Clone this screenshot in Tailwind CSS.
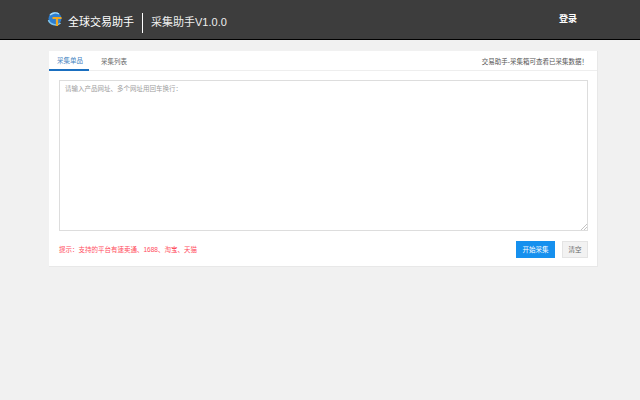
<!DOCTYPE html>
<html>
<head>
    <title>采集助手</title>
    <script src="https://cdn.jsdelivr.net/npm/@tailwindcss/browser@4"></script>
</head>
<body class="bg-[#f1f1f1] h-[400px] overflow-hidden font-['Liberation_Sans','Noto_Sans_CJK_SC',sans-serif]">

<header class="h-10 bg-[#3d3d3d] border-b border-black flex items-center pl-[47px] pr-[63px]">
    <div class="flex items-center pt-[6px]">
        <svg class="w-[17px] h-[17px] mr-1 -mt-[6px]" viewBox="0 0 17 17">
            <circle cx="8" cy="7.5" r="6.5" fill="#2f7fd0"/>
            <path d="M3 4c2-2 6-3 9-1" stroke="#a9dcf7" stroke-width="1.4" fill="none"/>
            <path d="M1.5 9c1 4 8 7 12 3" stroke="#7cc4ee" stroke-width="1.5" fill="none"/>
            <path d="M5.5 7h9M10 7v8" stroke="#f2a81e" stroke-width="2.2" fill="none"/>
        </svg>
        <span class="text-white text-[11px]">全球交易助手</span>
        <div class="w-px h-5 bg-white ml-2 mr-2"></div>
        <span class="text-[#eeeeee] text-[11px]">采集助手V1.0.0</span>
    </div>
    <span class="ml-auto text-white text-[9px] font-bold">登录</span>
</header>

<main class="mt-[11px] ml-[49px] w-[549px] h-[216px] bg-white border-b border-r border-[#e8e8e8]">
    <div class="h-5 border-b border-[#eeeeee] flex items-stretch">
        <div class="w-10 h-5 border-b-2 border-[#1a6fc0] text-[6.5px] text-[#3f7fc0] flex items-center pl-2 pt-[2px]">采集单品</div>
        <div class="w-[52px] text-[6.5px] text-[#666666] flex items-center pl-3 pt-[2px]">采集列表</div>
        <div class="ml-auto pr-[9px] pt-[3px] text-[6.5px] text-[#555555] flex items-center">交易助手-采集箱可查看已采集数据！</div>
    </div>
    <div class="pl-[10px] pr-[9px] pt-[9px]">
        <div class="relative h-[151px]">
            <textarea class="block w-[529px] h-[151px] resize-none border border-[#dddddd] px-[5px] py-[3px] text-[6.5px] outline-none placeholder:text-[#a0a0a0]" placeholder="请输入产品网址、多个网址用回车换行："></textarea>
            <svg class="absolute right-[1px] bottom-[1px] w-[6px] h-[6px]" viewBox="0 0 6 6">
                <path d="M0 6L6 0M3 6L6 3" stroke="#c4c4c4" stroke-width="1" fill="none"/>
            </svg>
        </div>
        <div class="flex items-center mt-[10px]">
            <span class="text-[6.5px] text-[#ff4d5e] pt-[1px]">提示：支持的平台有速卖通、1688、淘宝、天猫</span>
            <button class="ml-auto w-[39px] h-[17px] bg-[#1690ee] text-white text-[6.5px]">开始采集</button>
            <button class="ml-[7px] w-[26px] h-[17px] bg-[#f2f2f2] border border-[#e4e4e4] text-[#666666] text-[6.5px]">清空</button>
        </div>
    </div>
</main>

</body>
</html>
